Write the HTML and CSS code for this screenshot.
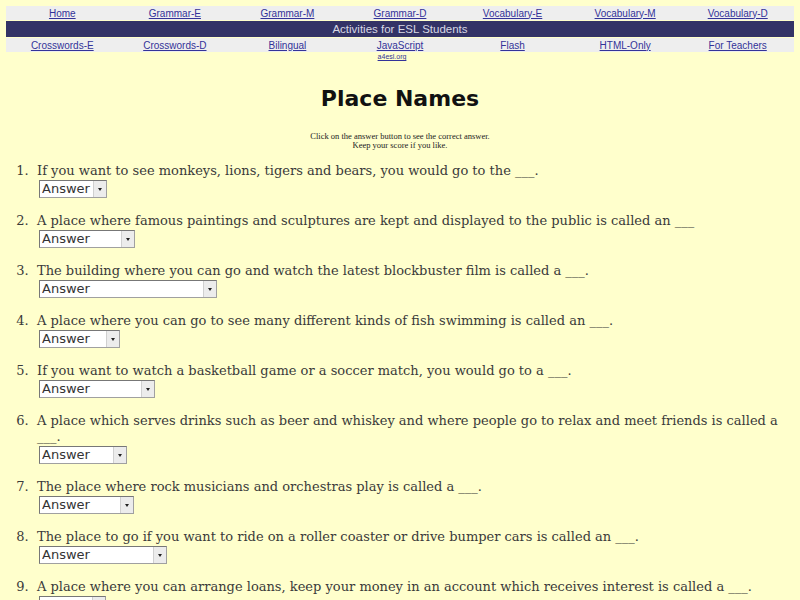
FILE: index.html
```html
<!DOCTYPE html>
<html>
<head>
<meta charset="utf-8">
<title>Place Names</title>
<link rel="stylesheet" href="styles.css">
</head>
<body>
<div class="nav">
  <div class="row light">
    <a href="#">Home</a><a href="#">Grammar-E</a><a href="#">Grammar-M</a><a href="#">Grammar-D</a><a href="#">Vocabulary-E</a><a href="#">Vocabulary-M</a><a href="#">Vocabulary-D</a>
  </div>
  <div class="band">Activities for ESL Students</div>
  <div class="row light">
    <a href="#">Crosswords-E</a><a href="#">Crosswords-D</a><a href="#">Bilingual</a><a href="#">JavaScript</a><a href="#">Flash</a><a href="#">HTML-Only</a><a href="#">For Teachers</a>
  </div>
  <div class="site"><a href="#">a4esl.org</a></div>
</div>

<h1 class="title">Place Names</h1>
<p class="intro">Click on the answer button to see the correct answer.<br>Keep your score if you like.</p>

<ol class="quiz">
  <li><div class="q">If you want to see monkeys, lions, tigers and bears, you would go to the ___.</div><span class="sel w1"><select><option>Answer</option><option>zoo</option></select></span></li>
  <li><div class="q">A place where famous paintings and sculptures are kept and displayed to the public is called an ___</div><span class="sel w2"><select><option>Answer</option><option>art gallery</option></select></span></li>
  <li><div class="q">The building where you can go and watch the latest blockbuster film is called a ___.</div><span class="sel w3"><select><option>Answer</option><option>movie theater / cinema</option></select></span></li>
  <li><div class="q">A place where you can go to see many different kinds of fish swimming is called an ___.</div><span class="sel w4"><select><option>Answer</option><option>aquarium</option></select></span></li>
  <li><div class="q">If you want to watch a basketball game or a soccer match, you would go to a ___.</div><span class="sel w5"><select><option>Answer</option><option>sports stadium</option></select></span></li>
  <li><div class="q">A place which serves drinks such as beer and whiskey and where people go to relax and meet friends is called a ___.</div><span class="sel w6"><select><option>Answer</option><option>pub / bar</option></select></span></li>
  <li><div class="q">The place where rock musicians and orchestras play is called a ___.</div><span class="sel w7"><select><option>Answer</option><option>concert hall</option></select></span></li>
  <li><div class="q">The place to go if you want to ride on a roller coaster or drive bumper cars is called an ___.</div><span class="sel w8"><select><option>Answer</option><option>amusement park</option></select></span></li>
  <li><div class="q">A place where you can arrange loans, keep your money in an account which receives interest is called a ___.</div><span class="sel w9"><select><option>Answer</option><option>bank</option></select></span></li>
</ol>
</body>
</html>
```

FILE: styles.css
```css
html, body {
  background: #ffffcc;
}
body {
  margin: 0;
  padding: 6px 6px 0 6px;
}
.nav {
  font-family: "Liberation Sans", Arial, sans-serif;
}
.row {
  display: grid;
  grid-template-columns: repeat(7, 1fr);
  height: 14px;
  align-items: center;
  background: #eeeeee;
}
.row a {
  text-align: center;
  font-size: 10px;
  color: #333399;
  text-decoration: underline;
}
.band {
  background: #333366;
  color: #d8d8e4;
  text-align: center;
  font-size: 11.5px;
  height: 16px;
  line-height: 16px;
  margin: 1px 0;
}
.site {
  text-align: center;
  font-size: 7px;
  line-height: 10px;
  padding-right: 16px;
}
.site a {
  color: #333399;
}
.title {
  font-family: "DejaVu Sans", sans-serif;
  font-weight: bold;
  font-size: 22px;
  text-align: center;
  color: #111;
  margin: 22px 0 0 0;
  line-height: 30px;
}
.intro {
  font-family: "Liberation Serif", serif;
  font-size: 8.5px;
  line-height: 9px;
  text-align: center;
  color: #222;
  margin: 18px 0 0 0;
}
.quiz {
  font-family: "DejaVu Serif", serif;
  font-size: 13px;
  color: #3a3a3a;
  margin: 13px 0 0 0;
  padding-left: 31px;
}
.quiz li {
  margin-bottom: 15px;
}
.quiz li::marker {
  content: counter(list-item) ".  ";
  color: #3a3a3a;
  white-space: pre;
}
.q {
  line-height: 16px;
}
.sel {
  position: relative;
  display: inline-block;
  height: 18px;
  margin-left: 2px;
  margin-top: 1px;
}
.sel select {
  appearance: none;
  -webkit-appearance: none;
  width: 100%;
  height: 18px;
  box-sizing: border-box;
  border: 1px solid #a0a0a0;
  border-top-color: #777;
  border-left-color: #777;
  border-radius: 0;
  background: #ffffff;
  font-family: "DejaVu Sans", sans-serif;
  font-size: 13px;
  color: #333;
  padding: 0 0 0 2px;
  margin: 0;
  line-height: 16px;
}
.sel::after {
  content: "";
  position: absolute;
  right: 1px;
  top: 1px;
  width: 13px;
  height: 16px;
  background: #ececec;
  border-left: 1px solid #d0d0d0;
  box-sizing: border-box;
  pointer-events: none;
}
.sel::before {
  content: "";
  position: absolute;
  right: 5px;
  top: 8px;
  width: 0;
  height: 0;
  border-left: 2px solid transparent;
  border-right: 2px solid transparent;
  border-top: 3px solid #222;
  z-index: 1;
  pointer-events: none;
}
.w1 { width: 68px; }
.w2 { width: 96px; }
.w3 { width: 178px; }
.w4 { width: 81px; }
.w5 { width: 116px; }
.w6 { width: 88px; }
.w7 { width: 95px; }
.w8 { width: 128px; }
.w9 { width: 67px; }
```
